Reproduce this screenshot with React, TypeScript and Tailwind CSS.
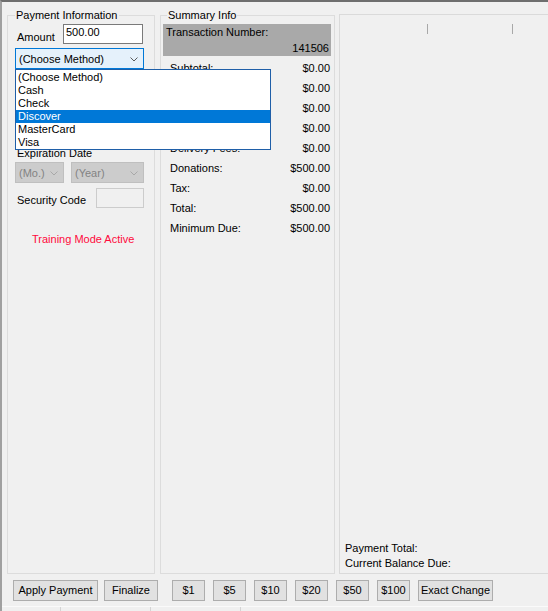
import React from "react";

function Chevron({ color }: { color: string }) {
  return (
    <svg width="8" height="5" viewBox="0 0 8 5" className="shrink-0">
      <polyline points="0.5,0.5 4,4 7.5,0.5" fill="none" stroke={color} strokeWidth="1" />
    </svg>
  );
}

const methods = ["(Choose Method)", "Cash", "Check", "Discover", "MasterCard", "Visa"];

const summaryRows: [string, string][] = [
  ["Subtotal:", "$0.00"],
  ["Discounts:", "$0.00"],
  ["Shipping:", "$0.00"],
  ["Handling:", "$0.00"],
  ["Delivery Fees:", "$0.00"],
  ["Donations:", "$500.00"],
  ["Tax:", "$0.00"],
  ["Total:", "$500.00"],
  ["Minimum Due:", "$500.00"],
];

function Btn({ label, className }: { label: string; className: string }) {
  return (
    <div
      className={
        "h-[21px] shrink-0 flex items-center justify-center border border-[#adadad] bg-[#e1e1e1] text-black " +
        className
      }
    >
      {label}
    </div>
  );
}

export default function App() {
  return (
    <div className="w-[548px] h-[611px] overflow-hidden bg-[#f0f0f0] border-t-2 border-l-2 border-t-[#6e6e6e] border-l-[#a0a0a0] flex flex-col font-['Liberation_Sans',Arial,sans-serif] text-[11px] leading-[13px] text-black">
      {/* top area */}
      <div className="flex items-start pt-[13px] pl-[5px]">
        {/* Payment Information */}
        <div className="relative w-[148px] h-[559px] shrink-0 border border-[#dcdcdc] flex flex-col items-start">
          <div className="absolute -top-[7px] left-[7px] px-px bg-[#f0f0f0] whitespace-nowrap">Payment Information</div>

          <div className="flex items-start mt-[8px] pl-[9px]">
            <div className="w-[46px] mt-[7px]">Amount</div>
            <div className="w-[80px] h-[20px] border border-[#7a7a7a] bg-white pl-[2px] pt-px">500.00</div>
          </div>

          <div className="relative mt-[4px] ml-[7px] z-10">
            <div className="w-[129px] h-[21px] border border-[#0078d7] bg-[#e5f1fb] flex items-center justify-between pl-[3px] pr-[5px] pt-px">
              <span>(Choose Method)</span>
              <Chevron color="#5a5a5a" />
            </div>
            <div className="absolute top-[21px] left-0 w-[256px] h-[81px] border border-[#1f5fa8] bg-white flex flex-col pt-px">
              {methods.map((m) => (
                <div
                  key={m}
                  className={
                    m === "Discover"
                      ? "h-[13px] pl-[2px] bg-[#0078d7] text-white"
                      : "h-[13px] pl-[2px]"
                  }
                >
                  {m}
                </div>
              ))}
            </div>
          </div>

          <div className="mt-[78px] ml-[9px]">Expiration Date</div>

          <div className="flex mt-[2px] ml-[7px] gap-[7px]">
            <div className="w-[49px] h-[21px] border border-[#bfbfbf] bg-[#cccccc] text-[#838383] flex items-center justify-between pl-[3px] pr-[5px] pt-px">
              <span>(Mo.)</span>
              <Chevron color="#a8a8a8" />
            </div>
            <div className="w-[73px] h-[21px] border border-[#bfbfbf] bg-[#cccccc] text-[#838383] flex items-center justify-between pl-[3px] pr-[5px] pt-px">
              <span>(Year)</span>
              <Chevron color="#a8a8a8" />
            </div>
          </div>

          <div className="flex items-start mt-[5px] pl-[9px]">
            <div className="w-[79px] mt-[6px]">Security Code</div>
            <div className="w-[48px] h-[20px] border border-[#cccccc] bg-[#f0f0f0]" />
          </div>

          <div className="mt-[25px] ml-[24px] text-[#ff0a3c]">Training Mode Active</div>
        </div>

        {/* Summary Info */}
        <div className="relative ml-[5px] w-[175px] h-[559px] shrink-0 border border-[#dcdcdc] flex flex-col">
          <div className="absolute -top-[7px] left-[6px] px-px bg-[#f0f0f0] whitespace-nowrap">Summary Info</div>

          <div className="mt-[8px] ml-[2px] w-[168px] h-[32px] bg-[#a9a9a9] flex flex-col justify-between pt-[2px] pl-[3px] pr-[2px] pb-px">
            <div>Transaction Number:</div>
            <div className="text-right">141506</div>
          </div>

          <div className="mt-[6px] flex flex-col gap-[7px] pl-[9px] pr-[4px]">
            {summaryRows.map(([l, v]) => (
              <div key={l} className="flex justify-between h-[13px]">
                <span>{l}</span>
                <span>{v}</span>
              </div>
            ))}
          </div>
        </div>

        {/* Right panel */}
        <div className="ml-[4px] -mt-px w-[212px] h-[560px] shrink-0 border-t border-l border-b border-[#dadada] flex flex-col justify-between">
          <div className="flex mt-[9px]">
            <div className="ml-[87px] w-px h-[10px] bg-[#a8a8a8]" />
            <div className="ml-[84px] w-px h-[10px] bg-[#a8a8a8]" />
          </div>
          <div className="flex flex-col gap-[2px] pl-[5px] pb-[3px]">
            <div>Payment Total:</div>
            <div>Current Balance Due:</div>
          </div>
        </div>
      </div>

      {/* buttons */}
      <div className="flex mt-[6px] pl-[11px]">
        <Btn label="Apply Payment" className="w-[85px]" />
        <Btn label="Finalize" className="w-[54px] ml-[6px]" />
        <Btn label="$1" className="w-[33px] ml-[14px]" />
        <Btn label="$5" className="w-[33px] ml-[8px]" />
        <Btn label="$10" className="w-[33px] ml-[8px]" />
        <Btn label="$20" className="w-[33px] ml-[8px]" />
        <Btn label="$50" className="w-[33px] ml-[8px]" />
        <Btn label="$100" className="w-[33px] ml-[8px]" />
        <Btn label="Exact Change" className="w-[75px] ml-[8px]" />
      </div>

      {/* bottom strip */}
      <div className="flex mt-[5px] h-[10px] border-t border-[#fafafa]">
        <div className="ml-[58px] w-px h-full bg-[#d4d4d4]" />
        <div className="ml-[89px] w-px h-full bg-[#d4d4d4]" />
        <div className="ml-[89px] w-px h-full bg-[#d4d4d4]" />
      </div>
    </div>
  );
}
